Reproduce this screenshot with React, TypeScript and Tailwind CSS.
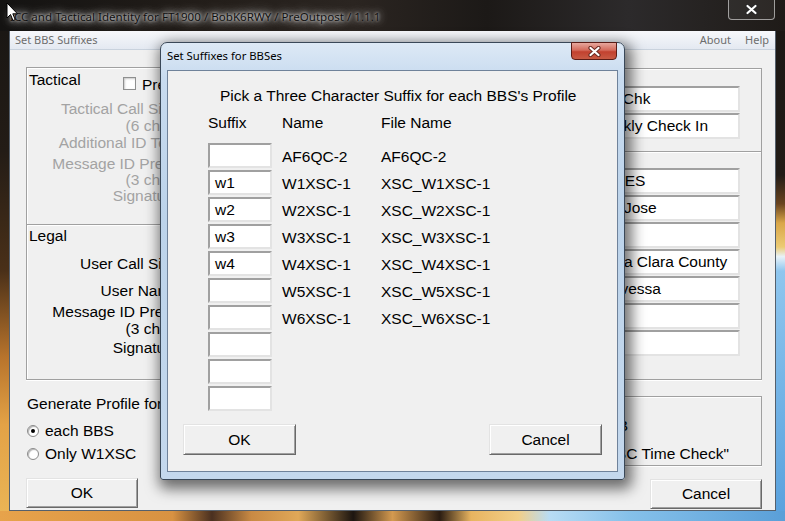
import React from 'react';

// Win7 "glass" chrome around a classic WinForms dialog, with a modal on top
const SYS = "font-['Noto_Sans','Open_Sans',sans-serif]";

type Row = { suffix: string; name: string; file: string };

const rows: Row[] = [
  { suffix: '', name: 'AF6QC-2', file: 'AF6QC-2' },
  { suffix: 'w1', name: 'W1XSC-1', file: 'XSC_W1XSC-1' },
  { suffix: 'w2', name: 'W2XSC-1', file: 'XSC_W2XSC-1' },
  { suffix: 'w3', name: 'W3XSC-1', file: 'XSC_W3XSC-1' },
  { suffix: 'w4', name: 'W4XSC-1', file: 'XSC_W4XSC-1' },
  { suffix: '', name: 'W5XSC-1', file: 'XSC_W5XSC-1' },
  { suffix: '', name: 'W6XSC-1', file: 'XSC_W6XSC-1' },
  { suffix: '', name: '', file: '' },
  { suffix: '', name: '', file: '' },
  { suffix: '', name: '', file: '' },
];

function Field({ value = '', className = '' }: { value?: string; className?: string }) {
  return (
    <div
      className={`flex shrink-0 items-center overflow-hidden whitespace-nowrap border-2 border-t-[#a0a0a0] border-l-[#a0a0a0] border-r-[#e3e3e3] border-b-[#e3e3e3] bg-white ${className}`}
    >
      {value}
    </div>
  );
}

function Button({ label, className = '' }: { label: string; className?: string }) {
  return (
    <button
      type="button"
      className={`flex shrink-0 items-center justify-center border border-t-[#e3e3e3] border-l-[#e3e3e3] border-r-[#696969] border-b-[#696969] bg-[#f0f0f0] shadow-[inset_1px_1px_0_#fff,inset_-1px_-1px_0_#a0a0a0] ${className}`}
    >
      {label}
    </button>
  );
}

function Radio({ checked = false }: { checked?: boolean }) {
  return (
    <span className="flex h-[12px] w-[12px] shrink-0 items-center justify-center rounded-full border border-[#8a8a8a] bg-white shadow-[inset_1px_1px_1px_#b4b4b4]">
      {checked && <span className="h-[4px] w-[4px] rounded-full bg-black" />}
    </span>
  );
}

function CloseX({ outline }: { outline: string }) {
  return (
    <svg width="13" height="11" viewBox="0 0 13 11">
      <path d="M2.5 2 L10.5 9 M10.5 2 L2.5 9" stroke={outline} strokeWidth="4.2" strokeLinecap="round" />
      <path d="M2.5 2 L10.5 9 M10.5 2 L2.5 9" stroke="#fff" strokeWidth="2.2" strokeLinecap="round" />
    </svg>
  );
}

function Label({ text, h = 'h-[17px]', className = '' }: { text: string; h?: string; className?: string }) {
  return (
    <div className={`flex w-[152px] items-center justify-end whitespace-nowrap ${h} ${className}`}>{text}</div>
  );
}

function SuffixDialog() {
  return (
    <div className="absolute left-[160px] top-[42px] flex h-[438px] w-[465px] flex-col rounded-t-[7px] rounded-b-[3px] border border-[#3a4858] bg-[linear-gradient(180deg,#dde9f6,#c8dbef_8%,#bcd3ea_40%,#c4d8ed)] shadow-[3px_5px_14px_4px_rgba(0,0,0,0.55)]">
      {/* title bar */}
      <div className="flex h-[27px] items-start justify-between">
        <span className={`${SYS} mt-[5px] pl-[6px] text-[11.3px] text-black`}>Set Suffixes for BBSes</span>
        <div className="mr-[7px] mt-[-1px] flex h-[18px] w-[46px] items-center justify-center rounded-b-[4px] border border-[#5b1c16] bg-[linear-gradient(180deg,#e7a79d,#d46a5b_45%,#c2412f_55%,#c85a44)]">
          <CloseX outline="#6a2a22" />
        </div>
      </div>

      {/* client */}
      <div className="mx-[6px] mb-[7px] flex flex-1 flex-col border border-[#6f829a] bg-[#f0f0f0]">
        <div className="pl-[52px] pt-[16px] leading-[18px]">Pick a Three Character Suffix for each BBS's Profile</div>

        <div className="mt-[9px] flex h-[18px] items-center pl-[40px]">
          <span className="w-[74px]">Suffix</span>
          <span className="w-[99px]">Name</span>
          <span>File Name</span>
        </div>

        <div className="mt-[11px] flex flex-col gap-[2px] pl-[40px]">
          {rows.map((r, i) => (
            <div key={i} className="flex h-[25px] items-center">
              <Field value={r.suffix} className="h-[25px] w-[64px] pl-[5px]" />
              <span className="ml-[10px] w-[99px] pt-[2px]">{r.name}</span>
              <span className="pt-[2px]">{r.file}</span>
            </div>
          ))}
        </div>

        <div className="mt-[13px] flex justify-between px-[15px]">
          <Button label="OK" className="h-[31px] w-[113px]" />
          <Button label="Cancel" className="h-[31px] w-[113px]" />
        </div>
      </div>
    </div>
  );
}

export default function App() {
  return (
    <div className="relative flex h-[521px] w-[785px] flex-col overflow-hidden bg-[#1a1816] font-['Liberation_Sans',Arial,sans-serif] text-[15.5px] text-black">
      {/* window title bar */}
      <div className="flex h-[31px] shrink-0 items-start bg-[linear-gradient(90deg,#141312,#221d19_25%,#2b2521_45%,#1c1917_62%,#2c2a2b_80%,#1f1b18)]">
        <span
          className={`${SYS} ml-[10px] mt-[8px] text-[11.6px] text-[#101010] [text-shadow:0_0_3px_#e8e8e8,0_0_6px_#d0d0d0,0_0_10px_#b8b8b8,0_0_16px_#9a9a9a]`}
        >
          ICC and Tactical Identity for FT1900 / BobK6RWY / PreOutpost / 1.1.1
        </span>
        <div className="ml-auto mr-[10px] flex h-[20px] w-[47px] items-center justify-center rounded-b-[4px] border border-t-0 border-[rgba(255,255,255,0.55)] bg-[rgba(255,255,255,0.06)]">
          <CloseX outline="#2a2a2a" />
        </div>
      </div>

      <div className="flex flex-1">
        <div className="w-[9px] bg-[linear-gradient(180deg,#1a1714,#231c16_25%,#4a3018_50%,#b8742c_68%,#e3a246_82%,#eab455)]" />

        {/* client area */}
        <div className="flex flex-1 flex-col border-x border-b border-[#55606c] bg-[#f0f0f0]">
          {/* menu bar */}
          <div
            className={`${SYS} flex h-[19px] shrink-0 items-center justify-between border-b border-[#c9d2dd] bg-[linear-gradient(180deg,#f7f8fb,#e4e9f1)] pl-[5px] pr-[6px] text-[11px] text-[#6d6d6d]`}
          >
            <span>Set BBS Suffixes</span>
            <div className="flex gap-[14px]">
              <span>About</span>
              <span>Help</span>
            </div>
          </div>

          <div className="flex flex-1 pl-[16px] pr-[13px] pt-[17px]">
            {/* left column */}
            <div className="flex w-[290px] flex-col">
              <div className="flex h-[157px] flex-col border border-b-0 border-[#a0a0a0] shadow-[inset_1px_1px_0_#fff]">
                <div className="flex h-[23px] items-start">
                  <span className="ml-[2px] mt-[3px] w-[94px] leading-[17px]">Tactical</span>
                  <span className="mt-[9px] h-[13px] w-[13px] border border-[#8e8f8f] bg-white shadow-[inset_1px_1px_2px_#c8c8c8]" />
                  <span className="ml-[6px] mt-[8px] leading-[17px]">Prefer Tactical</span>
                </div>
                <div className="mt-[9px] text-[#a3a3a3]">
                  <Label text="Tactical Call Sign" />
                  <Label text="(6 char)" />
                  <Label text="Additional ID Text" />
                  <Label text="Message ID Prefix" h="h-[16px]" className="mt-[5px]" />
                  <Label text="(3 char)" h="h-[16px]" />
                  <Label text="Signature" h="h-[16px]" />
                </div>
              </div>

              <div className="flex h-[156px] flex-col border border-[#a0a0a0] shadow-[inset_1px_1px_0_#fff,0_1px_0_#fff]">
                <span className="ml-[2px] mt-[2px] leading-[17px]">Legal</span>
                <Label text="User Call Sign" className="mt-[11px]" />
                <Label text="User Name" className="mt-[10px]" />
                <Label text="Message ID Prefix" className="mt-[4px]" />
                <Label text="(3 char)" />
                <Label text="Signature" className="mt-[2px]" />
              </div>

              <div className="ml-[1px] mt-[15px] leading-[17px]">Generate Profile for</div>
              <div className="mt-[7px] flex h-[23px] items-center gap-[6px] pl-[1px]">
                <Radio checked />
                <span>each BBS</span>
              </div>
              <div className="flex h-[23px] items-center gap-[6px] pl-[1px]">
                <Radio />
                <span>Only W1XSC</span>
              </div>
              <Button label="OK" className="mt-[13px] h-[30px] w-[112px]" />
            </div>

            {/* right column */}
            <div className="ml-[30px] flex flex-1 flex-col">
              <div className="mt-[1px] flex h-[83px] flex-col items-end gap-[1px] border border-b-0 border-[#a0a0a0] pr-[21px] pt-[17px] shadow-[inset_1px_1px_0_#fff]">
                <Field value="XSCChk" className="h-[26px] w-[152px] pl-[1px]" />
                <Field value="Weekly Check In" className="h-[26px] w-[152px] pl-[2px]" />
              </div>
              <div className="flex h-[229px] flex-col items-end gap-[1px] border border-[#a0a0a0] pr-[21px] pt-[16px] shadow-[inset_1px_1px_0_#fff,0_1px_0_#fff]">
                <Field value="RACES" className="h-[26px] w-[152px] pl-[2px]" />
                <Field value="San Jose" className="h-[26px] w-[152px] pl-[2px]" />
                <Field className="h-[26px] w-[152px]" />
                <Field value="Santa Clara County" className="h-[26px] w-[152px] pl-[2px]" />
                <Field value="Chavessa" className="h-[26px] w-[152px] pl-[2px]" />
                <Field className="h-[26px] w-[152px]" />
                <Field className="h-[26px] w-[152px]" />
              </div>
              <div className="mt-[16px] flex h-[70px] flex-col items-end border border-[#a0a0a0] shadow-[inset_1px_1px_0_#fff,0_1px_0_#fff]">
                <span className="mt-[20px] pr-[133px] leading-[17px]">Ctrl-B</span>
                <span className="mt-[11px] pr-[32px] leading-[17px]">"XSC Time Check"</span>
              </div>
              <Button label="Cancel" className="mt-[13px] h-[30px] w-[112px] self-end" />
            </div>
          </div>
        </div>

        <div className="w-[9px] bg-[linear-gradient(180deg,#1c1815,#221c17_30%,#6a4420_36%,#d9a648_40%,#eccb74_45%,#e8f2f8_47%,#8fc6ee_50%,#5aa2de)]" />
      </div>

      <div className="h-[10px] shrink-0 bg-[linear-gradient(90deg,#e7a34b_0%,#d89242_22%,#4a3020_27%,#c98a44_32%,#e0a858_38%,#1c1510_45%,#d49a50_50%,#2a1c12_56%,#e8b460_60%,#f2cf88_66%,#b8dcf4_70%,#86c1ea_80%,#5a9fd8_100%)]" />

      <SuffixDialog />

      {/* mouse pointer */}
      <svg className="absolute left-[6px] top-[2px]" width="13" height="20" viewBox="0 0 13 20">
        <path d="M1 1 L1 16 L4.5 12.5 L7 18.5 L9.2 17.6 L6.8 11.8 L11.5 11.8 Z" fill="#fff" stroke="#000" strokeWidth="1" strokeLinejoin="round" />
      </svg>
    </div>
  );
}
